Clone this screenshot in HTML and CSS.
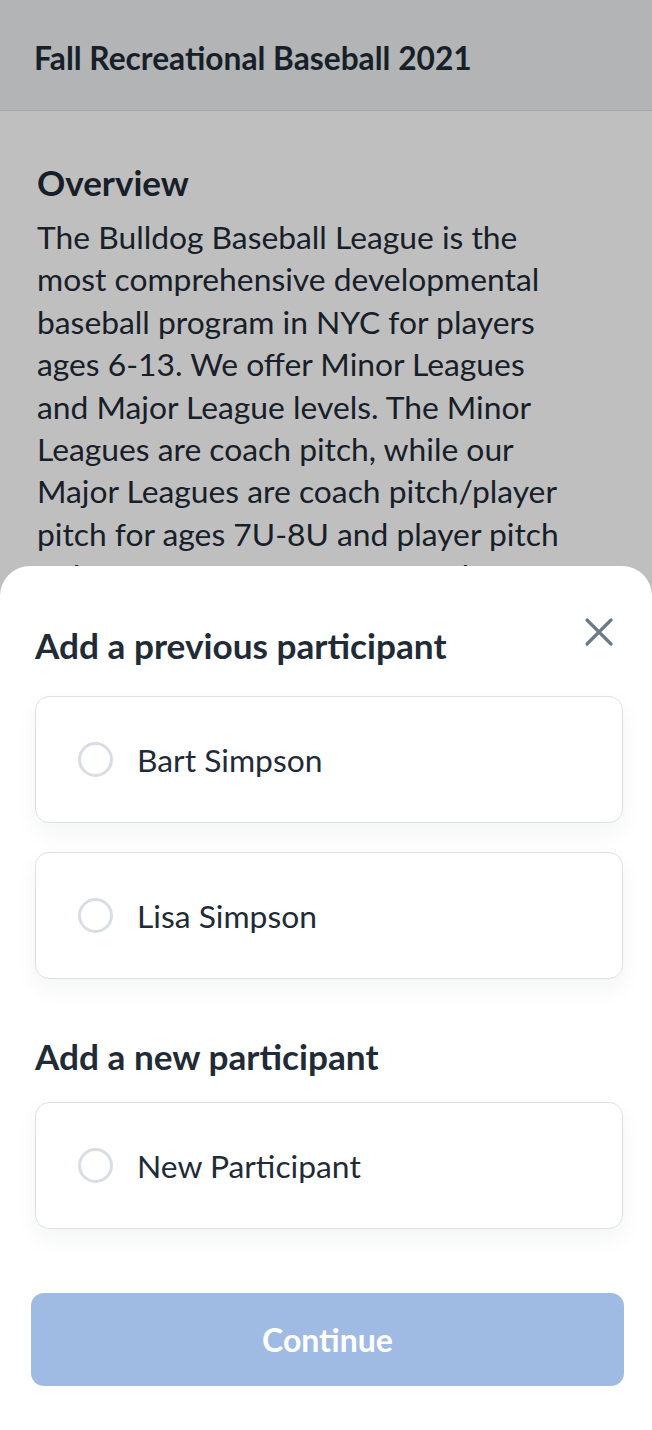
FILE: index.html
```html
<!DOCTYPE html>
<html lang="en">
<head>
<meta charset="utf-8">
<title>Fall Recreational Baseball 2021</title>
<link rel="stylesheet" href="styles.css">
</head>
<body>
<div class="page">
  <header class="topbar">
    <h1 class="topbar-title">Fall Recreational Baseball 2021</h1>
  </header>
  <main class="content">
    <h2 class="section-title">Overview</h2>
    <p class="section-text">The Bulldog Baseball League is the most comprehensive developmental baseball program in NYC for players ages 6-13. We offer Minor Leagues and Major League levels. The Minor Leagues are coach pitch, while our Major Leagues are coach pitch/player pitch for ages 7U-8U and player pitch only for 9U-13U. <a class="link" href="#">Learn more</a> about our program.</p>
  </main>
</div>
<div class="scrim"></div>
<section class="sheet">
  <div class="sheet-head">
    <h3 class="sheet-title">Add a previous participant</h3>
    <button class="close" aria-label="Close">
      <svg width="30" height="30" viewBox="0 0 30 30"><path d="M3 3 L27 27 M27 3 L3 27" stroke="#6b7a86" stroke-width="3.2" stroke-linecap="round" fill="none"/></svg>
    </button>
  </div>
  <div class="options first">
    <label class="option"><span class="radio"></span><span class="option-name">Bart Simpson</span></label>
    <label class="option"><span class="radio"></span><span class="option-name">Lisa Simpson</span></label>
  </div>
  <h3 class="sheet-title second">Add a new participant</h3>
  <div class="options last">
    <label class="option"><span class="radio"></span><span class="option-name">New Participant</span></label>
  </div>
  <button class="continue">Continue</button>
</section>
</body>
</html>
```
FILE: styles.css
```css
* { box-sizing: border-box; }
html, body { margin: 0; padding: 0; }
body {
  width: 652px;
  height: 1430px;
  overflow: hidden;
  position: relative;
  font-family: Lato, "Open Sans", sans-serif;
  color: #1f2b37;
  background: #ffffff;
}
.topbar {
  height: 111px;
  background: #eff0f2;
  border-bottom: 1px solid #dcdee1;
  padding: 39px 34px 0 34px;
}
.topbar-title {
  margin: 0;
  font-size: 31.7px;
  font-weight: 700;
  line-height: 38px;
}
.content {
  padding: 50px 82px 0 37px;
}
.section-title {
  margin: 0 0 13px 0;
  font-size: 35px;
  font-weight: 700;
  line-height: 42px;
}
.section-text {
  margin: 0;
  font-size: 31.8px;
  line-height: 42.4px;
}
.link { color: #2e5cb8; text-decoration: none; }
.scrim {
  position: absolute;
  inset: 0;
  background: rgba(0, 0, 0, 0.25);
}
.sheet {
  position: absolute;
  left: 0;
  right: 0;
  top: 566px;
  bottom: 0;
  background: #ffffff;
  border-radius: 30px 30px 0 0;
  padding: 58px 29px 0 35px;
}
.sheet-head {
  display: flex;
  justify-content: space-between;
  align-items: flex-start;
}
.sheet-title {
  margin: 0;
  font-size: 35.2px;
  font-weight: 700;
  line-height: 42px;
  color: #1f2b37;
}
.sheet-title.second { margin-top: 55.5px; }
.close {
  border: 0;
  background: none;
  padding: 0;
  margin: -7px 9px 0 0;
  width: 30px;
  height: 30px;
  display: block;
}
.close svg { display: block; }
.options {
  display: flex;
  flex-direction: column;
  gap: 29px;
}
.options.first { margin-top: 30px; }
.options.last { margin-top: 25.5px; }
.option {
  height: 127px;
  border: 1.5px solid #dde1e6;
  border-radius: 14px;
  display: flex;
  align-items: center;
  padding-left: 42px;
  gap: 24px;
  box-shadow: 0 10px 24px rgba(20, 30, 45, 0.05);
  background: #fff;
}
.radio {
  width: 35px;
  height: 35px;
  border: 3px solid #d9dee4;
  border-radius: 50%;
  flex: none;
}
.option-name {
  font-size: 31.8px;
  line-height: 38px;
}
.continue {
  display: block;
  margin: 64px 0 0 -4px;
  width: 593px;
  height: 93px;
  border: 0;
  border-radius: 13px;
  background: #a0bbe3;
  color: #ffffff;
  font-family: Lato, "Open Sans", sans-serif;
  font-size: 32px;
  font-weight: 700;
  padding: 0;
}
```
